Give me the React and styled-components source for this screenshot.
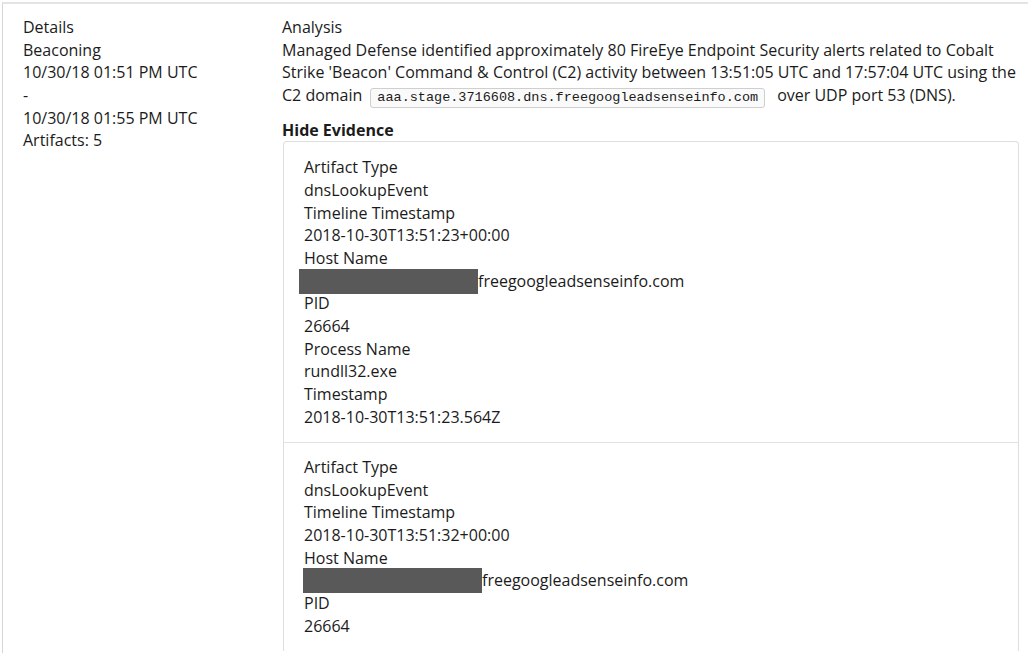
import React from 'react'
import styled, { createGlobalStyle } from 'styled-components'

const GlobalStyle = createGlobalStyle`
  html, body {
    margin: 0;
    padding: 0;
    background: #fff;
  }
  body {
    font-family: "Open Sans", "Noto Sans", "Liberation Sans", sans-serif;
    font-size: 16px;
    line-height: 22.65px;
    color: #1b1b1b;
  }
`

const Page = styled.div`
  padding: 2px 0 0 2px;
`

const Card = styled.section`
  height: 651px;
  overflow: hidden;
  border-top: 2px solid #e4e4e4;
  border-left: 1px solid #d6d6d6;
  display: grid;
  grid-template-columns: 259px 736px;
  padding: 12px 0 0 20px;
  box-sizing: border-box;
`

const Column = styled.div`
  display: flex;
  flex-direction: column;
`

const Line = styled.div`
  white-space: nowrap;
`

const Paragraph = styled.p`
  margin: 0;
`

const Code = styled.code`
  font-family: "Liberation Mono", "DejaVu Sans Mono", monospace;
  font-size: 13.5px;
  background: #fafafa;
  border: 1px solid #cfcfcf;
  border-radius: 3px;
  padding: 1px 6px 2px;
  margin: 0 12px 0 8px;
`

const Toggle = styled.div`
  font-weight: 700;
  margin-top: 9px;
`

const Evidence = styled.div`
  border: 1px solid #dedede;
  border-bottom: none;
  border-radius: 4px 4px 0 0;
  margin-left: 1px;
  width: 734px;
`

const Artifact = styled.div`
  padding: 13px 20px 14px;
  &:first-child {
    padding-top: 14px;
  }
  & + & {
    border-top: 1px solid #e2e2e2;
  }
`

const Redacted = styled.span`
  display: inline-block;
  vertical-align: top;
  width: 179px;
  height: 25px;
  margin: -1px 0 -2px ${(p) => p.$shift}px;
  background: #595959;
`

const artifacts = [
  {
    timeline: '2018-10-30T13:51:23+00:00',
    shift: -5,
    pid: '26664',
    process: 'rundll32.exe',
    stamp: '2018-10-30T13:51:23.564Z',
  },
  {
    timeline: '2018-10-30T13:51:32+00:00',
    shift: -1,
    pid: '26664',
  },
]

function ArtifactBlock({ item }) {
  return (
    <Artifact>
      <Line>Artifact Type</Line>
      <Line>dnsLookupEvent</Line>
      <Line>Timeline Timestamp</Line>
      <Line>{item.timeline}</Line>
      <Line>Host Name</Line>
      <Line>
        <Redacted $shift={item.shift} />
        freegoogleadsenseinfo.com
      </Line>
      <Line>PID</Line>
      <Line>{item.pid}</Line>
      {item.process && (
        <>
          <Line>Process Name</Line>
          <Line>{item.process}</Line>
        </>
      )}
      {item.stamp && (
        <>
          <Line>Timestamp</Line>
          <Line>{item.stamp}</Line>
        </>
      )}
    </Artifact>
  )
}

export default function App() {
  return (
    <Page>
      <GlobalStyle />
      <Card>
        <Column>
          <Line>Details</Line>
          <Line>Beaconing</Line>
          <Line>10/30/18 01:51 PM UTC</Line>
          <Line>-</Line>
          <Line>10/30/18 01:55 PM UTC</Line>
          <Line>Artifacts: 5</Line>
        </Column>
        <Column>
          <Line>Analysis</Line>
          <Paragraph>
            Managed Defense identified approximately 80 FireEye Endpoint Security alerts related to Cobalt
            Strike 'Beacon' Command &amp; Control (C2) activity between 13:51:05 UTC and 17:57:04 UTC using the
            C2 domain<Code>aaa.stage.3716608.dns.freegoogleadsenseinfo.com</Code>over UDP port 53 (DNS).
          </Paragraph>
          <Toggle>Hide Evidence</Toggle>
          <Evidence>
            {artifacts.map((a, i) => (
              <ArtifactBlock key={i} item={a} />
            ))}
          </Evidence>
        </Column>
      </Card>
    </Page>
  )
}
